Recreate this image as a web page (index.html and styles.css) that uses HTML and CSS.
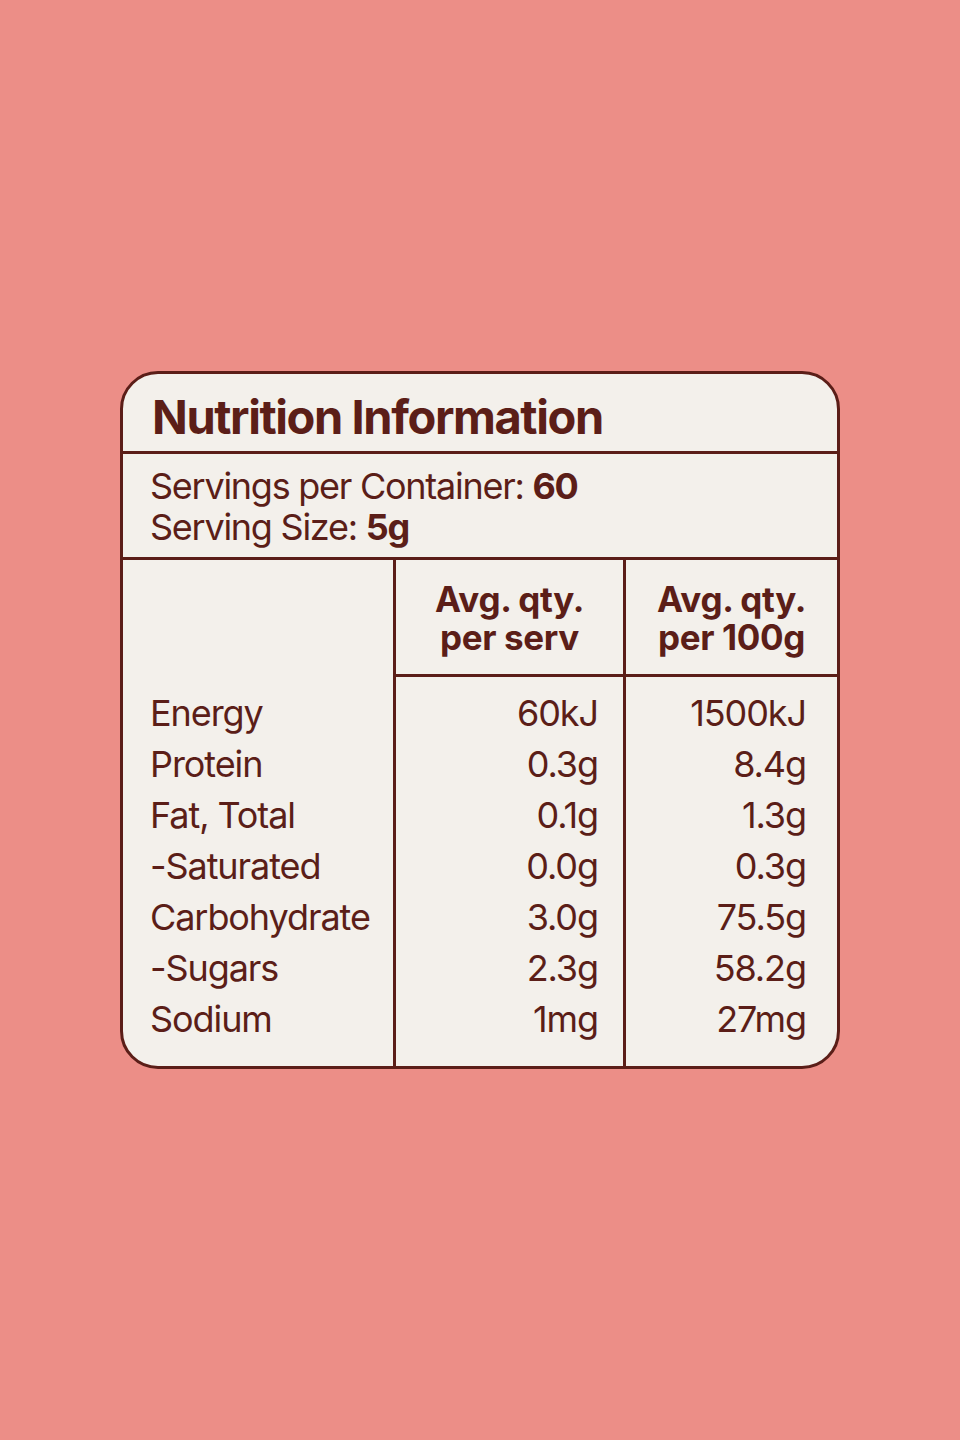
FILE: index.html
```html
<!DOCTYPE html>
<html lang="en">
<head>
<meta charset="utf-8">
<title>Nutrition Information</title>
<link rel="stylesheet" href="styles.css">
</head>
<body>
<main class="page">
  <section class="card">
    <h1 class="title">Nutrition Information</h1>
    <div class="info">
      <p>Servings per Container: <b>60</b></p>
      <p>Serving Size: <b>5g</b></p>
    </div>
    <div class="table">
      <div class="col col-name">
        <div class="head"></div>
        <ul class="rows">
          <li>Energy</li>
          <li>Protein</li>
          <li>Fat, Total</li>
          <li>-Saturated</li>
          <li>Carbohydrate</li>
          <li>-Sugars</li>
          <li>Sodium</li>
        </ul>
      </div>
      <div class="col col-serv">
        <div class="head">Avg. qty.<br>per serv</div>
        <ul class="rows">
          <li>60kJ</li>
          <li>0.3g</li>
          <li>0.1g</li>
          <li>0.0g</li>
          <li>3.0g</li>
          <li>2.3g</li>
          <li>1mg</li>
        </ul>
      </div>
      <div class="col col-100">
        <div class="head">Avg. qty.<br>per 100g</div>
        <ul class="rows">
          <li>1500kJ</li>
          <li>8.4g</li>
          <li>1.3g</li>
          <li>0.3g</li>
          <li>75.5g</li>
          <li>58.2g</li>
          <li>27mg</li>
        </ul>
      </div>
    </div>
  </section>
</main>
</body>
</html>
```
FILE: styles.css
```css
* { box-sizing: border-box; }
html, body { margin: 0; padding: 0; }
body {
  background: #ec8e87;
  font-family: Inter, "Noto Sans", sans-serif;
  color: #5b1e18;
}
.page {
  height: 1440px;
  display: flex;
  align-items: center;
  justify-content: center;
}
.card {
  width: 720px;
  height: 698px;
  background: #f3f0eb;
  border: 3px solid #5b1e18;
  border-radius: 38px;
  overflow: hidden;
  display: flex;
  flex-direction: column;
}
.title {
  margin: 0;
  height: 80px;
  padding: 17px 0 0 29px;
  font-size: 47px;
  font-weight: 700;
  letter-spacing: -0.03em;
  line-height: 52px;
  border-bottom: 3px solid #5b1e18;
}
.info {
  height: 106px;
  padding: 12px 0 0 27px;
  border-bottom: 3px solid #5b1e18;
  font-size: 36px;
  letter-spacing: -0.035em;
  line-height: 41px;
}
.info p { margin: 0; }
.info b { font-weight: 700; }
.table {
  flex: 1;
  display: grid;
  grid-template-columns: 273px 230px 1fr;
}
.col { display: flex; flex-direction: column; }
.col-name, .col-serv { border-right: 3px solid #5b1e18; }
.head {
  height: 117px;
  display: flex;
  align-items: center;
  justify-content: center;
  text-align: center;
  font-size: 35px;
  font-weight: 700;
  letter-spacing: -0.01em;
  line-height: 38px;
  padding-top: 2px;
}
.col-serv .head, .col-100 .head { border-bottom: 3px solid #5b1e18; }
.rows {
  list-style: none;
  margin: 0;
  padding: 11px 0 0 0;
  font-size: 36px;
  letter-spacing: -0.03em;
  line-height: 51px;
}
.col-name .rows { padding-left: 27px; }
.col-serv .rows { text-align: right; padding-right: 25px; }
.col-100 .rows { text-align: right; padding-right: 31px; }
```
